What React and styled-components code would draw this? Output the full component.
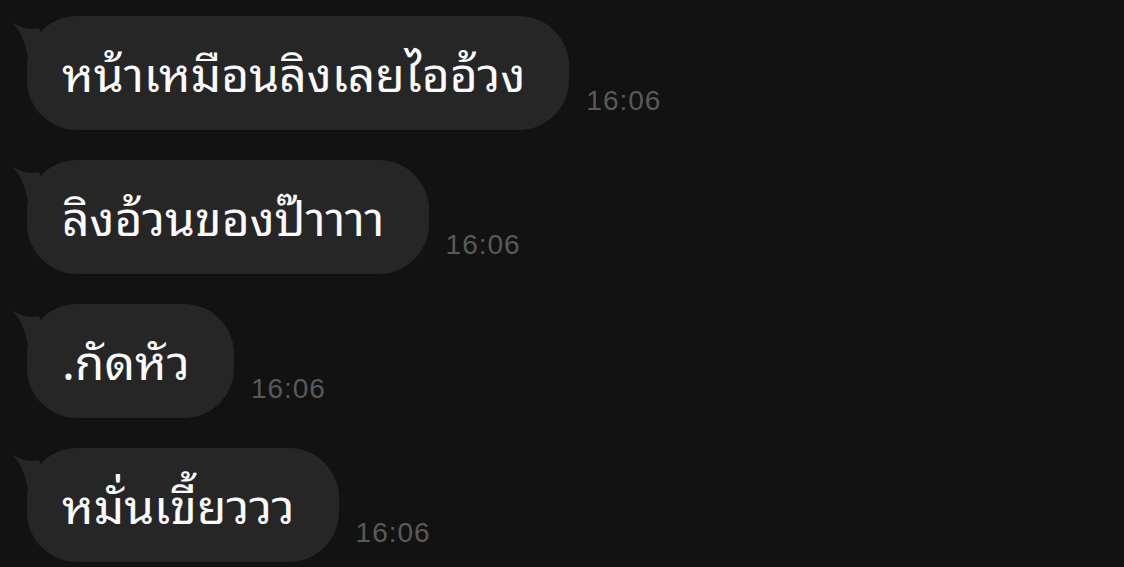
import styled, { createGlobalStyle } from "styled-components";

const GlobalStyle = createGlobalStyle`
  html, body {
    margin: 0;
    padding: 0;
    background: #121212;
  }
`;

const Chat = styled.div`
  display: flex;
  flex-direction: column;
  gap: 30px;
  padding: 16px 0 0 27px;
  height: 567px;
  box-sizing: border-box;
  background: #121212;
  overflow: hidden;
`;

const Row = styled.div`
  display: flex;
  align-items: flex-end;
  gap: 17px;
`;

const Bubble = styled.div`
  position: relative;
  height: 114px;
  box-sizing: border-box;
  padding: 0 44px 4px 35px;
  display: flex;
  align-items: center;
  background: #262626;
  border-radius: 50px;
  color: #fafafa;
  font-family: "Noto Sans Thai Looped", "Noto Sans Thai", sans-serif;
  font-size: 48px;
  line-height: 1;
  white-space: nowrap;
`;

const Tail = styled.svg`
  position: absolute;
  left: -16px;
  top: 4px;
  width: 40px;
  height: 50px;
`;

const Time = styled.span`
  margin-bottom: 13px;
  color: #595959;
  font-family: "Liberation Sans", Arial, sans-serif;
  font-size: 28px;
  letter-spacing: 1px;
`;

const messages = [
  "หน้าเหมือนลิงเลยไออ้วง",
  "ลิงอ้วนของป๊าาาา",
  ".กัดหัว",
  "หมั่นเขี้ยววว",
];

const Message = ({ text, time }) => (
  <Row>
    <Bubble>
      <Tail viewBox="0 0 40 50">
        <path d="M1 2 C 9 8, 18 10, 28 8 L 34 30 L 18 46 C 17 30, 12 14, 1 2 Z" fill="#262626" />
      </Tail>
      {text}
    </Bubble>
    <Time>{time}</Time>
  </Row>
);

export default function App() {
  return (
    <>
      <GlobalStyle />
      <Chat>
        {messages.map((m, i) => (
          <Message key={i} text={m} time="16:06" />
        ))}
      </Chat>
    </>
  );
}
